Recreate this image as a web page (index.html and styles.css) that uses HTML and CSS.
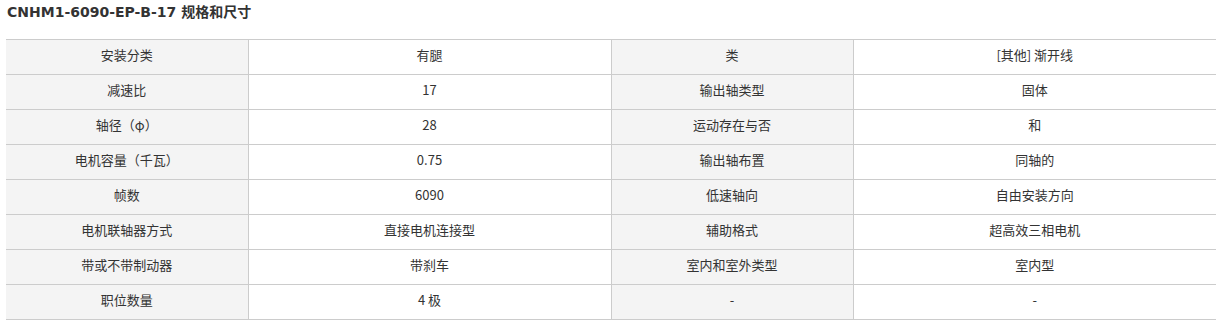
FILE: index.html
```html
<!DOCTYPE html>
<html lang="zh-CN">
<head>
<meta charset="utf-8">
<link rel="stylesheet" href="styles.css">
</head>
<body>
<div class="page">
  <h2 class="title">CNHM1-6090-EP-B-17 规格和尺寸</h2>
  <table class="spec">
    <colgroup><col class="c-k"><col class="c-v"><col class="c-k"><col class="c-v"></colgroup>
    <tbody>
      <tr><th>安装分类</th><td>有腿</td><th>类</th><td>[其他] 渐开线</td></tr>
      <tr><th>减速比</th><td>17</td><th>输出轴类型</th><td>固体</td></tr>
      <tr><th>轴径（φ）</th><td>28</td><th>运动存在与否</th><td>和</td></tr>
      <tr><th>电机容量（千瓦）</th><td>0.75</td><th>输出轴布置</th><td>同轴的</td></tr>
      <tr><th>帧数</th><td>6090</td><th>低速轴向</th><td>自由安装方向</td></tr>
      <tr><th>电机联轴器方式</th><td>直接电机连接型</td><th>辅助格式</th><td>超高效三相电机</td></tr>
      <tr><th>带或不带制动器</th><td>带刹车</td><th>室内和室外类型</th><td>室内型</td></tr>
      <tr><th>职位数量</th><td>4 极</td><th>-</th><td>-</td></tr>
    </tbody>
  </table>
</div>
</body>
</html>
```
FILE: styles.css
```css
html, body { margin: 0; padding: 0; background: #fff; }
.page {
  padding: 3px 11px 0 6px;
  font-family: "Noto Sans CJK SC", "DejaVu Sans", sans-serif;
  color: #333;
}
.title {
  margin: 0 0 0 1px;
  font-family: "DejaVu Sans", "Noto Sans CJK SC", sans-serif;
  font-size: 14px;
  font-weight: bold;
  line-height: 18px;
  color: #333;
}
.spec {
  margin-top: 18px;
  width: 1210px;
  border-collapse: collapse;
  table-layout: fixed;
  font-size: 13px;
}
.c-k { width: 242px; }
.c-v { width: 363px; }
.spec tr { height: 35px; }
.spec th, .spec td {
  padding: 0 4px 4px;
  border: 1px solid #cccccc;
  text-align: center;
  vertical-align: middle;
  font-weight: normal;
  line-height: 18px;
}
.spec th { background: #f4f4f4; }
.spec td { background: #fff; }
.spec tr > :first-child { border-left: none; }
.spec tr > :last-child { border-right: none; }
```
